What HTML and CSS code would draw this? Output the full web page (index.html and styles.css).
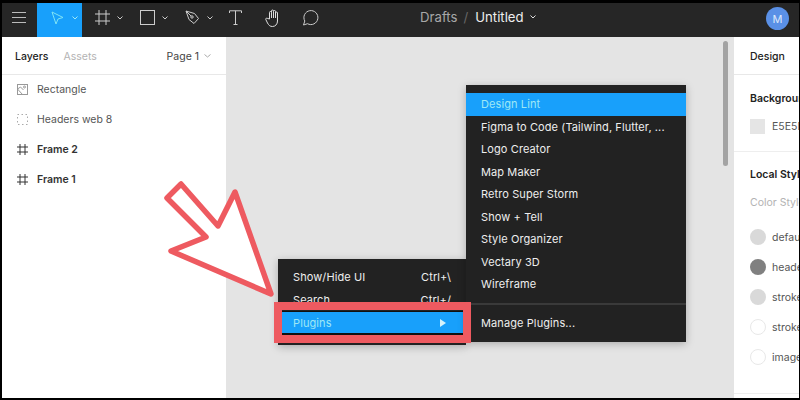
FILE: index.html
```html
<!DOCTYPE html>
<html lang="en">
<head>
  <meta charset="UTF-8" />
  <title>Untitled - Figma</title>
  <link rel="stylesheet" href="styles.css">
</head>
<body>
  <div class="app">
    <header class="toolbar">
      <div class="tool tool-menu">
        <svg width="14" height="12" viewBox="0 0 14 12"><path d="M0 .5h14M0 5.500h14M0 10.500h14" stroke="#bbb" fill="none"/></svg>
      </div>
      <div class="tool tool-move">
        <svg width="13" height="14" viewBox="0 0 13 14"><path d="M1 1l11 5.500-5 1.500-2 5z" stroke="#7fe3f5" fill="none"/></svg>
        <svg class="chev" width="6" height="4" viewBox="0 0 6 4"><path d="M.5.5L3 3 5.500.5" stroke="#9fe8f5" fill="none"/></svg>
      </div>
      <div class="tool tool-frame">
        <svg width="15" height="15" viewBox="0 0 15 15"><path d="M4 0v15M11 0v15M0 4h15M0 11h15" stroke="#ccc" fill="none"/></svg>
        <svg class="chev" width="6" height="4" viewBox="0 0 6 4"><path d="M.5.5L3 3 5.500.5" stroke="#ccc" fill="none"/></svg>
      </div>
      <div class="tool tool-rect">
        <svg width="15" height="15" viewBox="0 0 15 15"><rect x=".5" y=".5" width="14" height="14" stroke="#ccc" fill="none"/></svg>
        <svg class="chev" width="6" height="4" viewBox="0 0 6 4"><path d="M.5.5L3 3 5.500.5" stroke="#ccc" fill="none"/></svg>
      </div>
      <div class="tool tool-pen">
        <svg width="15" height="15" viewBox="0 0 15 15"><path d="M1 1l8.500 2.500 4 5-4.500 5-5-4zM1 1l5 5" stroke="#ccc" fill="none"/><circle cx="7" cy="7" r="1.200" stroke="#ccc" fill="none"/></svg>
        <svg class="chev" width="6" height="4" viewBox="0 0 6 4"><path d="M.5.5L3 3 5.500.5" stroke="#ccc" fill="none"/></svg>
      </div>
      <div class="tool tool-text">
        <svg width="13" height="15" viewBox="0 0 13 15"><path d="M.5 3V.8h12V3M6.500 .8v13.500M4.500 14.500h4" stroke="#ccc" fill="none"/></svg>
      </div>
      <div class="tool tool-hand">
        <svg width="17" height="18" viewBox="0 0 17 18"><path d="M4.500 10V3.500a1 1 0 0 1 2 0V2a1 1 0 0 1 2 0v.5a1 1 0 0 1 2 0V4a1 1 0 0 1 2 0v8c0 3-2 5.500-5 5.500-2.500 0-3.500-1-5-3.500L.8 10.500c-.5-1 1-2 2-1zM6.500 3.500V9M8.500 2.500V9M10.500 3V9" stroke="#ddd" fill="none"/></svg>
      </div>
      <div class="tool tool-comment">
        <svg width="17" height="17" viewBox="0 0 17 17"><path d="M1.500 16l1.300-4A7 7 0 1 1 5.500 14.700z" stroke="#ccc" fill="none"/></svg>
      </div>
      <div class="doc-title">
        <span class="drafts">Drafts</span>
        <span class="slash">/</span>
        <span class="doc-name">Untitled</span>
        <svg width="6" height="4" viewBox="0 0 6 4"><path d="M.5.5L3 3 5.500.5" stroke="#ddd" fill="none"/></svg>
      </div>
      <div class="avatar">M</div>
    </header>

    <div class="main">
      <aside class="left-panel">
        <div class="panel-tabs">
          <span class="tab-active">Layers</span>
          <span class="tab-muted">Assets</span>
          <span class="page-select">Page 1
            <svg width="7" height="4" viewBox="0 0 7 4"><path d="M.5.500l3 2.500 3-2.500" stroke="#aaa" fill="none"/></svg>
          </span>
        </div>
        <ul class="layers">
          <li>
            <svg width="11" height="11" viewBox="0 0 11 11"><rect x=".5" y=".5" width="10" height="10" stroke="#999" fill="none"/><path d="M.5 5l5 5.500M.5 5l3-2 3 3" stroke="#999" fill="none"/><circle cx="7.500" cy="3" r="1" stroke="#999" fill="none"/></svg>
            Rectangle
          </li>
          <li>
            <svg width="11" height="11" viewBox="0 0 11 11"><rect x=".5" y=".5" width="10" height="10" stroke="#aaa" stroke-dasharray="1.500 2.500" fill="none"/></svg>
            Headers web 8
          </li>
          <li class="frame">
            <svg width="11" height="11" viewBox="0 0 11 11"><path d="M3 0v11M8 0v11M0 3h11M0 8h11" stroke="#333" fill="none"/></svg>
            Frame 2
          </li>
          <li class="frame">
            <svg width="11" height="11" viewBox="0 0 11 11"><path d="M3 0v11M8 0v11M0 3h11M0 8h11" stroke="#333" fill="none"/></svg>
            Frame 1
          </li>
        </ul>
      </aside>

      <section class="canvas">
        <div class="scrollbar"></div>
      </section>

      <aside class="right-panel">
        <div class="design-tab">Design</div>
        <div class="section bg-section">
          <div class="section-title">Background</div>
          <div class="bg-row"><span class="swatch"></span>E5E5E5</div>
        </div>
        <div class="section styles-section">
          <div class="section-title">Local Styles</div>
          <div class="color-label">Color Styles</div>
          <div class="style-row"><span class="dot dot-light"></span>default</div>
          <div class="style-row"><span class="dot dot-dark"></span>header</div>
          <div class="style-row"><span class="dot dot-light"></span>stroke</div>
          <div class="style-row"><span class="dot dot-white"></span>stroke</div>
          <div class="style-row"><span class="dot dot-white"></span>image</div>
        </div>
      </aside>

      <div class="menu context-menu">
        <div class="menu-row">Show/Hide UI<span>Ctrl+\</span></div>
        <div class="menu-row">Search<span>Ctrl+/</span></div>
        <div class="menu-row plugins-row">Plugins<i class="caret"></i></div>
      </div>

      <div class="menu sub-menu">
        <div class="menu-row selected">Design Lint</div>
        <div class="menu-row">Figma to Code (Tailwind, Flutter, ...</div>
        <div class="menu-row">Logo Creator</div>
        <div class="menu-row">Map Maker</div>
        <div class="menu-row">Retro Super Storm</div>
        <div class="menu-row">Show + Tell</div>
        <div class="menu-row">Style Organizer</div>
        <div class="menu-row">Vectary 3D</div>
        <div class="menu-row">Wireframe</div>
        <div class="menu-sep"></div>
        <div class="menu-row">Manage Plugins...</div>
      </div>

      <div class="highlight-box"></div>

      <svg class="arrow" width="116" height="122" viewBox="0 0 116 122">
        <path d="M21 6L7 20l39 39-35 14 100 43-36-102-17 34z" fill="#fff" stroke="#ee5a60" stroke-width="5.500" stroke-linejoin="round"/>
      </svg>
    </div>
  </div>
</body>
</html>
```

FILE: styles.css
```css
* {
  margin: 0;
  padding: 0;
  box-sizing: border-box;
}

body {
  width: 800px;
  height: 400px;
  overflow: hidden;
  font-family: Inter, "Liberation Sans", sans-serif;
  font-size: 10.500px;
  color: #333;
}

.app {
  width: 800px;
  height: 400px;
  display: flex;
  flex-direction: column;
  border: 2px solid #000;
  border-top-width: 3px;
  border-right-width: 1px;
}

/* top bar */
.toolbar {
  height: 34px;
  flex: none;
  display: flex;
  align-items: stretch;
  background: #262626;
}

.tool {
  display: flex;
  align-items: center;
  padding-bottom: 5px;
}

.tool-menu { width: 35px; padding-left: 10px; }
.tool-move { width: 45px; padding-left: 14px; background: #18a0fb; }
.tool-frame { width: 46px; padding-left: 13px; }
.tool-rect { width: 45px; padding-left: 12px; }
.tool-pen { width: 44px; padding-left: 12px; }
.tool-text { width: 37px; padding-left: 12px; }
.tool-hand { width: 39px; padding-left: 11px; }
.tool-comment { width: 37px; padding-left: 9px; }

.chev { margin-left: 7px; }
.tool-move .chev { margin-left: 8px; }

.doc-title {
  margin-left: 90px;
  padding-bottom: 6px;
  display: flex;
  align-items: center;
  font-size: 13.200px;
}

.drafts { color: #a8a8a8; }
.slash { color: #666; margin: 0 7px 0 6px; }
.doc-name { color: #eee; margin-right: 6px; }

.avatar {
  width: 23px;
  height: 23px;
  margin: 4px 10px 0 auto;
  border-radius: 50%;
  background: #5a90e6;
  color: #dce8fb;
  font-size: 11px;
  display: flex;
  align-items: center;
  justify-content: center;
}

/* panels */
.main {
  flex: 1;
  min-height: 0;
  display: flex;
  position: relative;
}

.left-panel {
  width: 224px;
  flex: none;
  background: #fff;
}

.panel-tabs {
  height: 38px;
  padding: 1px 15px 0 13px;
  display: flex;
  align-items: center;
  border-bottom: 1px solid #e8e8e8;
}

.tab-active { color: #222; font-weight: 500; }
.tab-muted { color: #b3b3b3; margin-left: 15px; }

.page-select {
  margin-left: auto;
  display: flex;
  align-items: center;
  gap: 5px;
  color: #444;
}

.layers {
  list-style: none;
}

.layers li {
  height: 30px;
  padding-left: 15px;
  padding-bottom: 2px;
  display: flex;
  align-items: center;
  gap: 9px;
  color: #555;
}

.layers .frame {
  color: #333;
  font-weight: 600;
}

.canvas {
  flex: 1;
  background: #e4e4e4;
  position: relative;
}

.scrollbar {
  position: absolute;
  top: 4px;
  right: 6px;
  width: 5px;
  height: 125px;
  border-radius: 3px;
  background: #a3a3a3;
}

.right-panel {
  width: 65px;
  flex: none;
  overflow: hidden;
  background: #fff;
  white-space: nowrap;
}

.design-tab {
  height: 38px;
  padding: 1px 0 0 16px;
  display: flex;
  align-items: center;
  border-bottom: 1px solid #e8e8e8;
  color: #222;
  font-weight: 500;
}

.section {
  padding-left: 16px;
  border-bottom: 1px solid #eee;
}

.section-title {
  color: #222;
  font-weight: 600;
}

.bg-section {
  height: 77px;
  padding-top: 17px;
}

.bg-row {
  margin-top: 14px;
  display: flex;
  align-items: center;
  gap: 7px;
  color: #555;
}

.swatch {
  width: 15px;
  height: 15px;
  flex: none;
  background: #e5e5e5;
}

.styles-section {
  height: 242px;
  padding-top: 16px;
}

.color-label {
  margin-top: 15px;
  margin-bottom: 13px;
  color: #b3b3b3;
}

.style-row {
  height: 30px;
  display: flex;
  align-items: center;
  gap: 6px;
  color: #555;
}

.dot {
  width: 16px;
  height: 16px;
  flex: none;
  border-radius: 50%;
}

.dot-light { background: #d9d9d9; }
.dot-dark { background: #808080; }
.dot-white { background: #fff; border: 1px solid #e8e8e8; }

/* menus */
.menu {
  position: absolute;
  background: #222;
  color: #eee;
  font-size: 11px;
  box-shadow: 0 2px 8px rgba(0, 0, 0, 0.25);
  white-space: nowrap;
}

.menu-row {
  height: 22.500px;
  padding: 0 15px;
  display: flex;
  align-items: center;
  justify-content: space-between;
  letter-spacing: 0.1px;
}

.context-menu {
  left: 276px;
  top: 222px;
  width: 188px;
  height: 86px;
  padding-top: 7px;
}

.plugins-row {
  height: 24px;
  padding: 0 20px 0 15px;
  border-top: 1px solid #111;
  border-bottom: 2px solid #111;
  background: #18a0fb;
  color: #9fe8f5;
}

.caret {
  width: 0;
  height: 0;
  border-left: 6px solid #d5f3fb;
  border-top: 4px solid transparent;
  border-bottom: 4px solid transparent;
}

.sub-menu {
  left: 464px;
  top: 48px;
  width: 220px;
  height: 257px;
  padding-top: 8px;
}

.sub-menu .selected {
  background: #18a0fb;
  color: #9fe8f5;
}

.menu-sep {
  height: 2px;
  margin-top: 7px;
  margin-bottom: 7px;
  background: #3a3a3a;
}

.highlight-box {
  position: absolute;
  left: 272px;
  top: 265px;
  width: 197px;
  height: 41px;
  border: 8px solid #ee5a60;
}

.arrow {
  position: absolute;
  left: 158px;
  top: 141px;
}
```
